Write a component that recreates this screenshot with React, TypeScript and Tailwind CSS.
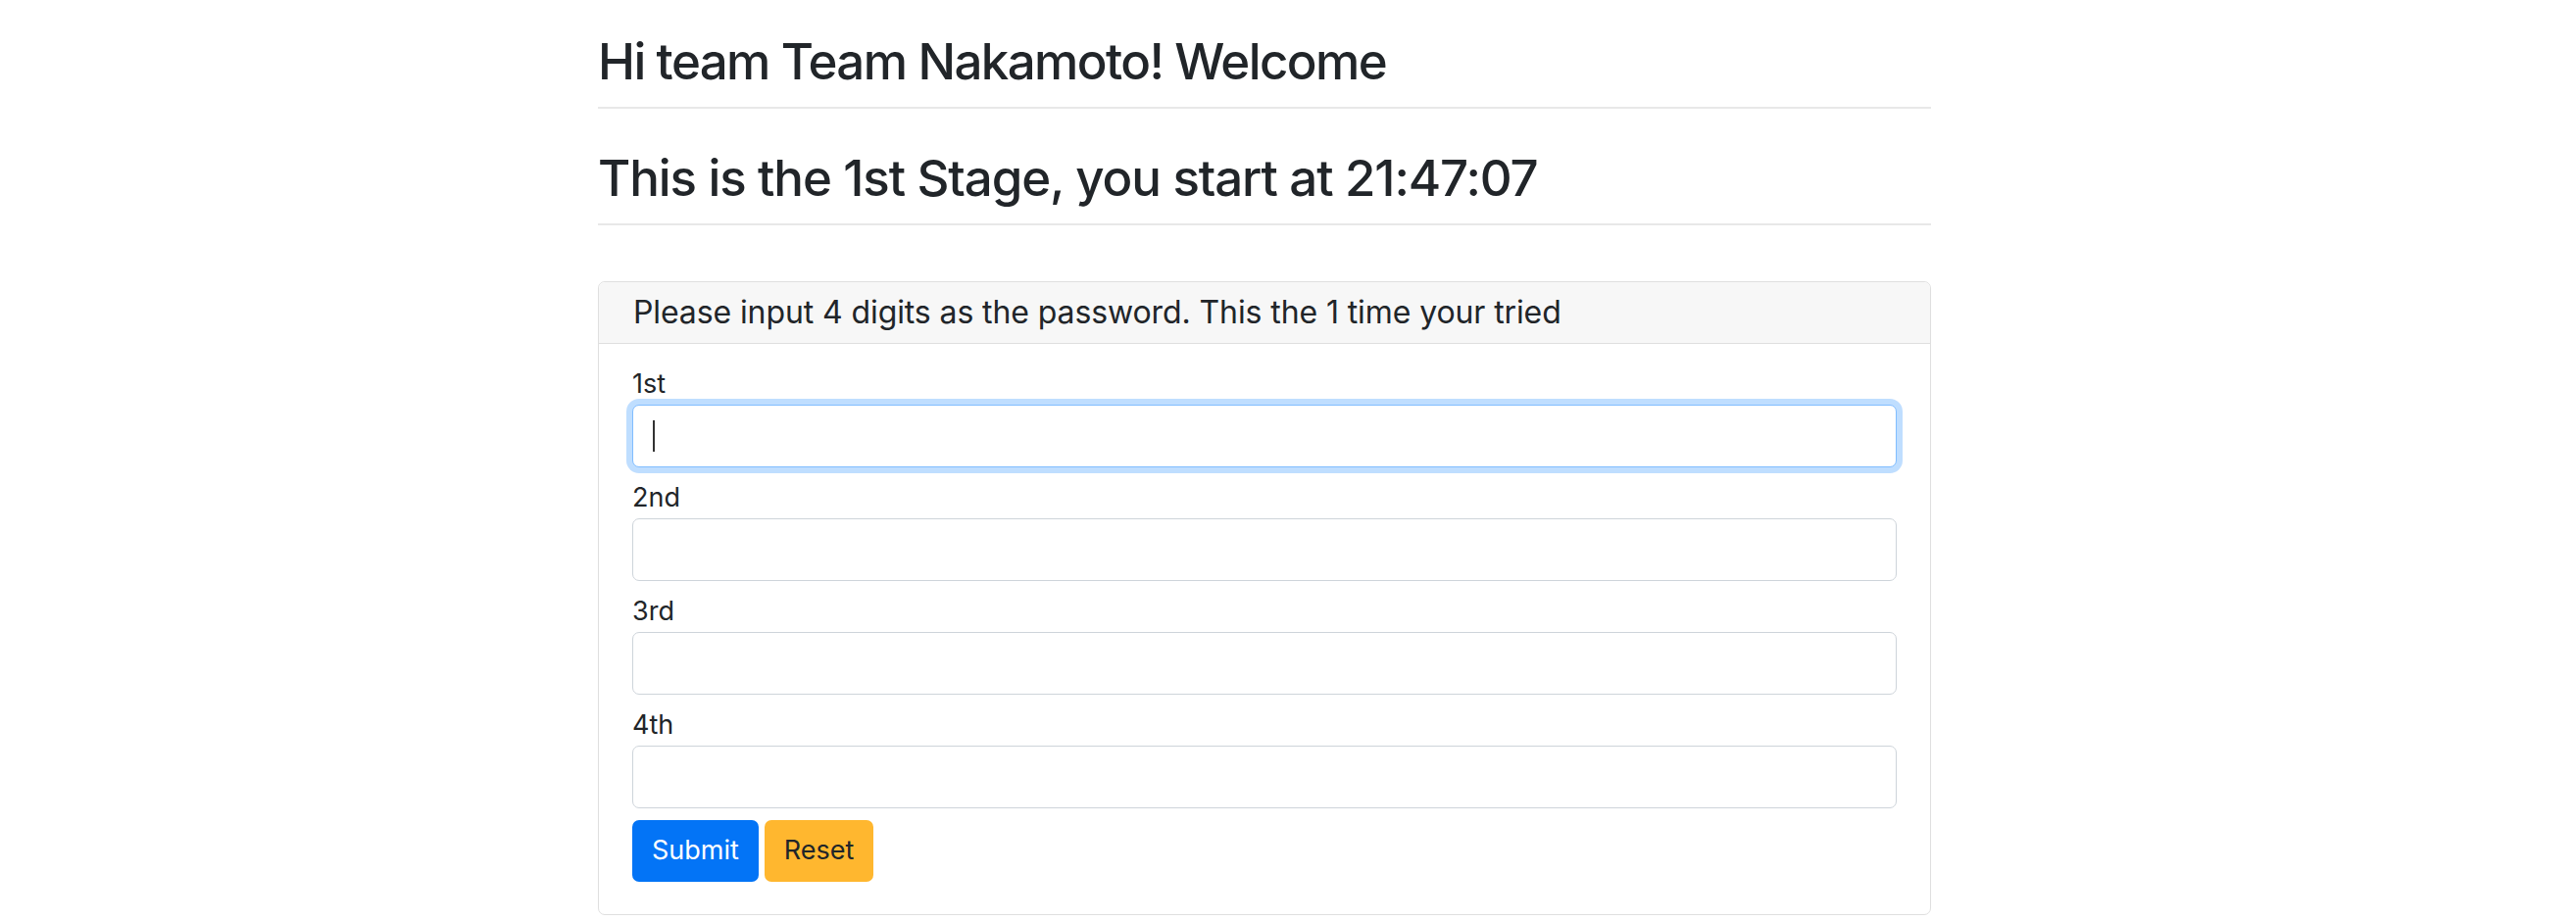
const fields = ["1st", "2nd", "3rd", "4th"];

export default function App() {
  return (
    <div className="min-h-screen bg-white font-[Inter,sans-serif] text-[#212529]">
      <div className="ml-[610px] w-[1360px] pt-[30px]">
        {/* welcome headings */}
        <h2 className="text-[51px] leading-[66px] font-medium tracking-[-1.6px]">Hi team Team Nakamoto! Welcome</h2>
        <div className="mt-[13px] h-[2px] bg-[#e8e8e8]" />
        <h2 className="mt-[38px] text-[51px] leading-[66px] font-medium tracking-[-1.1px]">
          This is the 1st Stage, you start at 21:47:07
        </h2>
        <div className="mt-[13px] h-[2px] bg-[#e8e8e8]" />

        {/* password card */}
        <div className="mt-[57px] rounded-[7px] border border-[#dfdfdf]">
          <div className="flex h-[63px] items-center rounded-t-[7px] border-b border-[#dfdfdf] bg-[#f7f7f7] pl-[35px]">
            <span className="text-[32px] leading-[40px] tracking-[-0.1px]">
              Please input 4 digits as the password. This the 1 time your tried
            </span>
          </div>
          <div className="px-[34px] pt-[20px] pb-[33px]">
            <div className="flex flex-col gap-[10px]">
              {fields.map((name, i) => (
                <div key={name}>
                  <label className="block h-[42px] text-[27px] leading-[42px]">{name}</label>
                  <div className="relative">
                    <input
                      type="text"
                      className={
                        i === 0
                          ? "block h-[64px] w-full rounded-[7px] border border-[#80bdff] bg-white px-[20px] shadow-[0_0_0_6px_rgba(0,123,255,0.25)] outline-none"
                          : "block h-[64px] w-full rounded-[7px] border border-[#ced4da] bg-white px-[20px] outline-none"
                      }
                    />
                    {i === 0 && (
                      <span className="absolute left-[21px] top-[16px] h-[32px] w-[2px] bg-[#333]" />
                    )}
                  </div>
                </div>
              ))}
            </div>
            <div className="mt-[12px] flex gap-[6px]">
              <button className="h-[63px] rounded-[7px] bg-[#0374f6] px-[20px] text-[27px] text-white">
                Submit
              </button>
              <button className="h-[63px] rounded-[7px] bg-[#ffb72f] px-[20px] text-[27px] text-[#212529]">
                Reset
              </button>
            </div>
          </div>
        </div>
      </div>
    </div>
  );
}
